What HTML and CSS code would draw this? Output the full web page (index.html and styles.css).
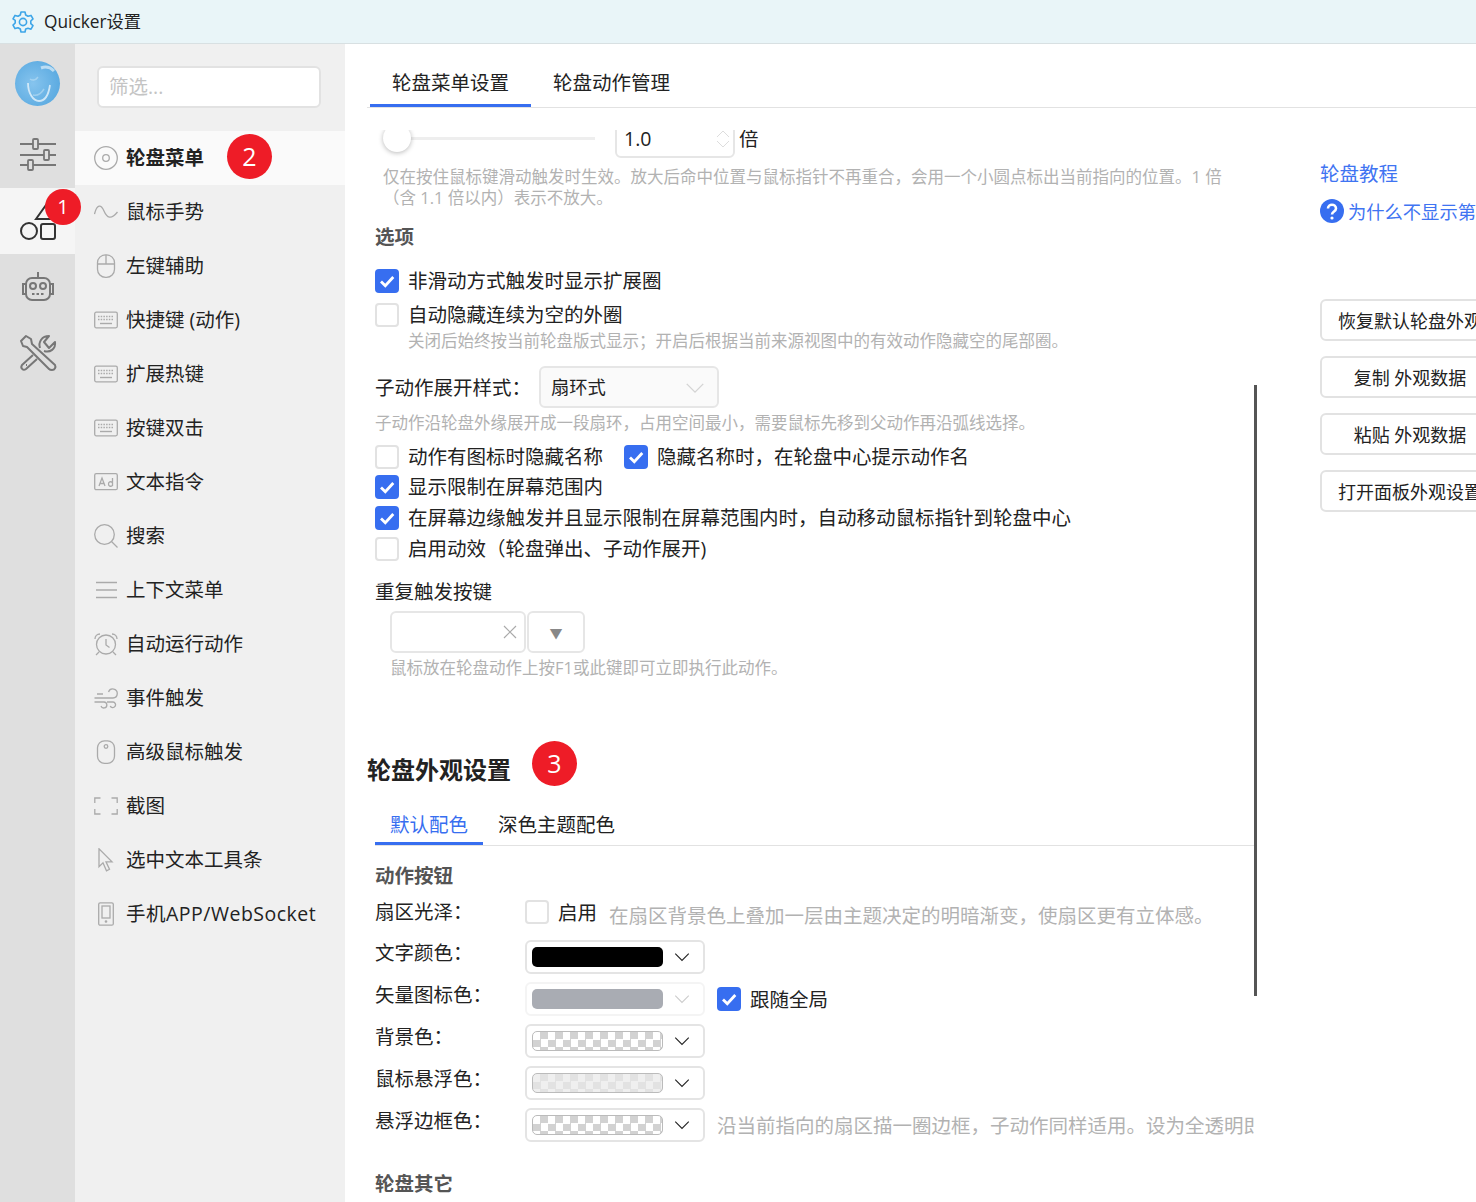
FILE: index.html
```html
<!DOCTYPE html>
<html lang="zh-CN">
<head>
    <meta charset="UTF-8">
    <title>Quicker设置</title>
    <link rel="stylesheet" href="styles.css">
</head>
<body>

<svg class="defs" width="0" height="0">
    <symbol id="i-keyboard" viewBox="0 0 24 24">
        <rect x="0.7" y="4.200" width="22.6" height="15.600" rx="1.5" fill="none" stroke="currentColor" stroke-width="1.3"/>
        <path d="M4 8.500h16M4 11.500h16" stroke="currentColor" stroke-width="1.4" stroke-dasharray="1.5 1.2" fill="none"/>
        <path d="M6 15.500h12" stroke="currentColor" stroke-width="1.4" fill="none"/>
    </symbol>
    <symbol id="i-check" viewBox="0 0 24 24">
        <path d="M6 12.5l4.3 4.3L18.3 8" fill="none" stroke="#fff" stroke-width="2.8"/>
    </symbol>
    <symbol id="i-chevron" viewBox="0 0 16 16">
        <path d="M2 5l6 6 6-6" fill="none" stroke="currentColor" stroke-width="1"/>
    </symbol>
</svg>

<!-- Title bar -->
<header class="titlebar">
    <svg class="title-icon" width="24" height="24" viewBox="0 0 24 24" fill="none" stroke="#3da5e8" stroke-width="1.6" stroke-linejoin="round">
        <path d="M10 2h4l.7 3 2.3 1.3 3-.9 2 3.5-2.2 2.1v2.6l2.2 2.1-2 3.5-3-.9L14.700 19l-.7 3h-4l-.7-3L7 17.700l-3 .9-2-3.500L4.200 13v-2.600L2 8.900l2-3.500 3 .9L9.300 5z"/>
        <circle cx="12" cy="12" r="3.600"/>
    </svg>
    <span class="title-text">Quicker设置</span>
</header>

<div class="app">

    <!-- Icon rail -->
    <nav class="rail">
        <div class="avatar">
            <svg width="45" height="45" viewBox="0 0 45 45" fill="none" stroke="#dff0fa" stroke-width="1.800">
                <path d="M13 22c0 10 5 18 11 18 7 0 10-9 11-16" opacity=".85"/>
                <path d="M26 7c5-2 10 0 13 3" stroke-width="3" opacity=".7"/>
                <path d="M15 18c3 2 6 1 8-2M18 34c4 1 8-1 11-6" stroke-width="1.500" opacity=".4"/>
            </svg>
        </div>
        <div class="rail-item">
            <svg width="36" height="36" viewBox="0 0 36 36" fill="none" stroke="#777" stroke-width="1.800">
                <path d="M0 7h13M18 7h18M0 18h24M29 18h7M0 28h8M13 28h23"/>
                <rect x="13" y="2" width="5" height="10" rx="1"/>
                <rect x="24" y="13" width="5" height="10" rx="1"/>
                <rect x="8" y="23" width="5" height="10" rx="1"/>
            </svg>
        </div>
        <div class="rail-item active">
            <svg width="38" height="38" viewBox="0 0 38 38" fill="none" stroke="#333" stroke-width="2">
                <circle cx="10" cy="29" r="8"/>
                <rect x="22" y="22" width="14" height="15" rx="2"/>
                <path d="M17 17L27 3l9 14z"/>
            </svg>
            <span class="badge badge-one">1</span>
        </div>
        <div class="rail-item">
            <svg width="34" height="34" viewBox="0 -1 34 34" fill="none" stroke="#777" stroke-width="2">
                <path d="M17 1v6"/>
                <rect x="5" y="7" width="24" height="22" rx="6"/>
                <path d="M5 13H2v10h3M29 13h3v10h-3"/>
                <circle cx="12" cy="15" r="3"/>
                <circle cx="22" cy="15" r="3"/>
                <path d="M11 23h12" stroke-dasharray="2.500 2"/>
            </svg>
        </div>
        <div class="rail-item">
            <svg width="38" height="38" viewBox="0 0 38 38" fill="none" stroke="#777" stroke-width="2" stroke-linejoin="round">
                <path d="M2 7l5-5 5 3 1 5 23 21c1 2 0 5-3 5-1 0-2 0-3-1L8 13l-4-1z"/>
                <path d="M21 14c-2-6 2-12 9-12l-5 6 5 6 6-6c1 7-5 11-11 9"/>
                <path d="M14 21L3 31c-2 3 1 6 4 4l11-10"/>
                <path d="M7 31l1 0"/>
            </svg>
        </div>
    </nav>

    <!-- Sidebar -->
    <aside class="sidebar">
        <div class="filter">筛选...</div>
        <ul class="menu">
            <li class="menu-item selected">
                <svg class="menu-icon" viewBox="0 0 24 24"><circle cx="12" cy="12" r="11.300"/><circle cx="12" cy="12" r="3.300"/></svg>
                <b>轮盘菜单</b>
                <span class="badge badge-two">2</span>
            </li>
            <li class="menu-item">
                <svg class="menu-icon" viewBox="0 0 24 24"><path d="M0.500 14C3 4 7 4 10 11s7 9 13.500 1"/></svg>
                鼠标手势
            </li>
            <li class="menu-item">
                <svg class="menu-icon" viewBox="0 0 24 24"><rect x="3.500" y="0.800" width="17" height="22.500" rx="8"/><path d="M3.500 10h17M12 1v9"/></svg>
                左键辅助
            </li>
            <li class="menu-item">
                <svg class="menu-icon"><use href="#i-keyboard"/></svg>
                快捷键 (动作)
            </li>
            <li class="menu-item">
                <svg class="menu-icon"><use href="#i-keyboard"/></svg>
                扩展热键
            </li>
            <li class="menu-item">
                <svg class="menu-icon"><use href="#i-keyboard"/></svg>
                按键双击
            </li>
            <li class="menu-item">
                <svg class="menu-icon" viewBox="0 0 24 24"><rect x="0.700" y="3.700" width="22.600" height="16" rx="1.500"/><path d="M5 16l3-8 3 8M6 13.500h4M18.500 8v8M18.500 12.500c-2-1.500-4-.5-4 1.500s2 3 4 1.500"/></svg>
                文本指令
            </li>
            <li class="menu-item">
                <svg class="menu-icon" viewBox="0 0 24 24"><circle cx="10.500" cy="10.500" r="9.800"/><path d="M17.500 17.500l6 6"/></svg>
                搜索
            </li>
            <li class="menu-item">
                <svg class="menu-icon" viewBox="0 0 24 24"><path d="M2 4.500h21M2 12h21M2 19.500h21"/></svg>
                上下文菜单
            </li>
            <li class="menu-item">
                <svg class="menu-icon" viewBox="0 0 24 24"><circle cx="12" cy="12.500" r="9.500"/><path d="M12 7v6l3.500 2.500M1 7c0-3 2-5 5-5M23 7c0-3-2-5-5-5M5 20l-3 3M19 20l3 3"/></svg>
                自动运行动作
            </li>
            <li class="menu-item">
                <svg class="menu-icon" viewBox="0 0 24 24"><path d="M0.500 12H19a4.500 4.500 0 1 0-4.500-6M3 8h6M13 16h6a2.800 2.800 0 1 1-2.800 4M0.500 16h9.500a3 3 0 1 1-3 4"/></svg>
                事件触发
            </li>
            <li class="menu-item">
                <svg class="menu-icon" viewBox="0 0 24 24"><rect x="3.500" y="0.800" width="17" height="22.500" rx="7"/><circle cx="12" cy="6.500" r="1.800"/></svg>
                高级鼠标触发
            </li>
            <li class="menu-item">
                <svg class="menu-icon" viewBox="0 0 24 24"><path d="M6.500 4H0.800v5M17.500 4h5.700v5M6.500 20H0.800v-5M17.500 20h5.700v-5"/></svg>
                截图
            </li>
            <li class="menu-item">
                <svg class="menu-icon" viewBox="0 0 24 24"><path d="M5 0.800v18l4-4 3.500 8 3-1.500-3.500-7.500h6z"/></svg>
                选中文本工具条
            </li>
            <li class="menu-item wide-latin">
                <svg class="menu-icon" viewBox="0 0 24 24"><rect x="4.700" y="0.800" width="14.600" height="22.400" rx="1.500"/><rect x="8" y="4" width="8" height="12"/><circle cx="12" cy="19.500" r="0.700"/></svg>
                手机APP/WebSocket
            </li>
        </ul>
    </aside>

    <!-- Main panel -->
    <main class="main">
        <div class="tabs">
            <div class="tab current">轮盘菜单设置</div>
            <div class="tab">轮盘动作管理</div>
        </div>

        <div class="panel">
            <section class="scroll">
                <div class="slider-row">
                    <div class="slider"><span class="thumb"></span></div>
                    <div class="num-input">
                        <span class="tight">1.0</span>
                        <svg class="spin" width="18" height="24" viewBox="0 0 18 24" fill="none" stroke="#ddd"><path d="M3 10l6-6 6 6M3 14l6 6 6-6"/></svg>
                    </div>
                    <span class="tight">倍</span>
                </div>
                <p class="hint hint-wide">仅在按住鼠标键滑动触发时生效。放大后命中位置与鼠标指针不再重合，会用一个小圆点标出当前指向的位置。1 倍<br>（含 1.1 倍以内）表示不放大。</p>

                <h4 class="group-title">选项</h4>
                <div class="check-row first"><span class="cb on"><svg><use href="#i-check"/></svg></span>非滑动方式触发时显示扩展圈</div>
                <div class="check-row second"><span class="cb"></span>自动隐藏连续为空的外圈</div>
                <p class="hint hint-check">关闭后始终按当前轮盘版式显示；开启后根据当前来源视图中的有效动作隐藏空的尾部圈。</p>

                <div class="select-row">
                    <label class="select-label">子动作展开样式：</label>
                    <div class="select">扇环式<svg class="chev" width="22" height="22"><use href="#i-chevron"/></svg></div>
                </div>
                <p class="hint hint-select">子动作沿轮盘外缘展开成一段扇环，占用空间最小，需要鼠标先移到父动作再沿弧线选择。</p>

                <div class="check-row r-hide">
                    <span class="cb"></span>动作有图标时隐藏名称
                    <span class="cb on next"><svg><use href="#i-check"/></svg></span>隐藏名称时，在轮盘中心提示动作名
                </div>
                <div class="check-row r-limit"><span class="cb on"><svg><use href="#i-check"/></svg></span>显示限制在屏幕范围内</div>
                <div class="check-row r-move"><span class="cb on"><svg><use href="#i-check"/></svg></span>在屏幕边缘触发并且显示限制在屏幕范围内时，自动移动鼠标指针到轮盘中心</div>
                <div class="check-row r-move"><span class="cb"></span>启用动效（轮盘弹出、子动作展开)</div>

                <div class="plain-label">重复触发按键</div>
                <div class="key-row">
                    <div class="key-input">
                        <svg width="14" height="14" viewBox="0 0 14 14" stroke="#aaa" stroke-width="1.200"><path d="M1 1l12 12M13 1L1 13"/></svg>
                    </div>
                    <div class="key-drop">▼</div>
                </div>
                <p class="hint hint-key">鼠标放在轮盘动作上按F1或此键即可立即执行此动作。</p>

                <h2 class="section-title">轮盘外观设置<span class="badge badge-three">3</span></h2>

                <div class="subtabs">
                    <div class="subtab current">默认配色</div>
                    <div class="subtab">深色主题配色</div>
                </div>

                <h4 class="group-title action-title">动作按钮</h4>
                <div class="color-row gloss">
                    <span class="color-label">扇区光泽：</span>
                    <span class="cb"></span><span class="gloss-on">启用</span>
                    <span class="hint gloss-hint">在扇区背景色上叠加一层由主题决定的明暗渐变，使扇区更有立体感。</span>
                </div>
                <div class="color-row">
                    <span class="color-label">文字颜色：</span>
                    <div class="color-select"><span class="swatch black"></span><svg class="chev-sm"><use href="#i-chevron"/></svg></div>
                </div>
                <div class="color-row">
                    <span class="color-label">矢量图标色：</span>
                    <div class="color-select off"><span class="swatch grey"></span><svg class="chev-sm"><use href="#i-chevron"/></svg></div>
                    <span class="cb on follow"><svg><use href="#i-check"/></svg></span><span class="gloss-on">跟随全局</span>
                </div>
                <div class="color-row">
                    <span class="color-label">背景色：</span>
                    <div class="color-select"><span class="swatch checker"></span><svg class="chev-sm"><use href="#i-chevron"/></svg></div>
                </div>
                <div class="color-row">
                    <span class="color-label">鼠标悬浮色：</span>
                    <div class="color-select"><span class="swatch checker faint"></span><svg class="chev-sm"><use href="#i-chevron"/></svg></div>
                </div>
                <div class="color-row">
                    <span class="color-label">悬浮边框色：</span>
                    <div class="color-select"><span class="swatch checker"></span><svg class="chev-sm"><use href="#i-chevron"/></svg></div>
                    <span class="hint border-hint">沿当前指向的扇区描一圈边框，子动作同样适用。设为全透明即可关闭此效果。</span>
                </div>

                <h4 class="group-title other-title">轮盘其它</h4>
            </section>

            <span class="scrollbar"></span>

            <section class="side-col">
                <a class="link tutorial">轮盘教程</a>
                <a class="link why">
                    <svg width="24" height="24" viewBox="0 0 24 24"><circle cx="12" cy="12" r="12" fill="#376ef0"/><path d="M8 9.500c0-5 8-5 8 0 0 3-4 3-4 6" fill="none" stroke="#fff" stroke-width="2.600"/><circle cx="12" cy="19" r="1.600" fill="#fff"/></svg>
                    为什么不显示第三圈
                </a>
                <div class="side-buttons">
                    <button class="side-btn">恢复默认轮盘外观</button>
                    <button class="side-btn">复制 外观数据</button>
                    <button class="side-btn">粘贴 外观数据</button>
                    <button class="side-btn">打开面板外观设置</button>
                </div>
            </section>
        </div>
    </main>
</div>

</body>
</html>
```

FILE: styles.css
```css
* {
    margin: 0;
    padding: 0;
    box-sizing: border-box;
}

html, body {
    height: 1202px;
    overflow: hidden;
}

body {
    font-family: "Open Sans", "Noto Sans CJK SC", sans-serif;
    font-size: 19.5px;
    color: #222;
    background: #fff;
}

.defs {
    position: absolute;
}

/* Title bar */
.titlebar {
    height: 44px;
    display: flex;
    align-items: center;
    padding-left: 11px;
    background: #e9f5f8;
    border-bottom: 1px solid #d8e0e2;
    font-size: 17.3px;
}

.title-icon {
    margin-right: 9px;
}

.title-text {
    padding-bottom: 3px;
}

.app {
    display: flex;
    height: 1158px;
}

/* Icon rail */
.rail {
    width: 75px;
    flex: none;
    background: #dfdfdf;
    padding-top: 17px;
}

.avatar {
    width: 45px;
    height: 45px;
    margin: 0 0 16px 15px;
    border-radius: 50%;
    overflow: hidden;
    background: radial-gradient(circle at 40% 50%, #86c4ee, #4fa3dd);
}

.avatar svg {
    display: block;
}

.rail-item {
    height: 66px;
    display: flex;
    align-items: center;
    justify-content: center;
    position: relative;
}

.rail-item.active {
    background: #f5f5f5;
}

.badge {
    position: absolute;
    display: flex;
    align-items: center;
    justify-content: center;
    border-radius: 50%;
    background: #ee1c27;
    color: #fff;
    font-weight: 400;
    padding-bottom: 2px;
}

.badge-one {
    width: 36px;
    height: 36px;
    left: 45px;
    top: 1px;
    font-size: 20px;
}

.badge-two,
.badge-three {
    width: 45px;
    height: 45px;
    font-size: 25px;
}

.badge-two {
    left: 152px;
    top: 3px;
}

.badge-three {
    left: 165px;
    top: -13px;
}

/* Sidebar */
.sidebar {
    width: 270px;
    flex: none;
    background: #f0f0f0;
    padding-top: 22px;
}

.filter {
    width: 224px;
    height: 42px;
    margin-left: 22px;
    padding-left: 10px;
    line-height: 38px;
    background: #fff;
    border: 2px solid #e2e2e2;
    border-radius: 6px;
    color: #c4c4c4;
}

.menu {
    list-style: none;
    margin-top: 23px;
}

.menu-item {
    height: 54px;
    display: flex;
    align-items: center;
    padding-left: 19px;
    padding-bottom: 3px;
    position: relative;
}

.menu-item.selected {
    background: #fafafa;
}

.menu-item.wide-latin {
    letter-spacing: 0.5px;
}

.menu-item b {
    font-weight: 700;
}

.menu-icon {
    width: 24px;
    height: 24px;
    margin-right: 8px;
    fill: none;
    stroke: #aaa;
    stroke-width: 1.3;
    color: #aaa;
    flex: none;
    position: relative;
    top: 1.5px;
}

/* Main panel */
.main {
    flex: 1;
    min-width: 0;
    overflow: hidden;
    background: #fff;
}

.tabs {
    height: 64px;
    display: flex;
    margin-left: 22px;
    padding-left: 3px;
    border-bottom: 1px solid #e2e2e2;
    align-items: flex-end;
}

.tab {
    height: 47px;
    padding: 0 22px;
    line-height: 46px;
    border-bottom: 3px solid transparent;
}

.tab.current {
    border-bottom-color: #376ef0;
}

.panel {
    display: flex;
    height: 1094px;
    position: relative;
}

.scroll {
    flex: none;
    width: 909px;
    height: 1072px;
    margin-top: 22px;
    padding-left: 30px;
    overflow: hidden;
}

.scrollbar {
    position: absolute;
    left: 909px;
    top: 277px;
    width: 3px;
    height: 611px;
    background: #555;
}

.slider-row {
    height: 40px;
    margin: -12px 0 0 8px;
    display: flex;
    align-items: center;
}

.tight {
    line-height: 14px;
    position: relative;
    top: 1px;
}

.slider {
    width: 212px;
    height: 3px;
    background: #eee;
    position: relative;
    margin-right: 20px;
}

.thumb {
    position: absolute;
    left: 0;
    top: -13px;
    width: 28px;
    height: 28px;
    border-radius: 50%;
    background: #fff;
    box-shadow: 0 1px 5px rgba(0, 0, 0, 0.28);
}

.num-input {
    width: 120px;
    height: 40px;
    margin-right: 4px;
    padding-left: 7px;
    display: flex;
    align-items: center;
    border: 2px solid #e6e6e6;
    border-radius: 6px;
    position: relative;
}

.spin {
    position: absolute;
    right: 1px;
    top: 7px;
}

.hint {
    color: #b2b2b2;
    font-size: 16.5px;
    line-height: 21px;
}

.hint-wide {
    margin: 8px 0 0 8px;
}

.group-title {
    height: 24px;
    line-height: 25px;
    margin-top: 16px;
    font-weight: 700;
    font-size: 19.5px;
    color: #555;
}

.check-row {
    height: 24px;
    line-height: 24px;
    display: flex;
    align-items: center;
    white-space: nowrap;
}

.check-row.first {
    margin-top: 21px;
}

.check-row.second {
    margin-top: 10px;
}

.check-row.r-hide {
    margin-top: 12px;
}

.check-row.r-limit {
    margin-top: 6px;
}

.check-row.r-move {
    margin-top: 7px;
}

.cb {
    width: 24px;
    height: 24px;
    flex: none;
    margin-right: 9px;
    border: 2px solid #e2e2e2;
    border-radius: 4px;
    background: #fff;
}

.cb.on {
    background: #376ef0;
    border: none;
}

.cb svg {
    display: block;
    width: 24px;
    height: 24px;
}

.cb.next {
    margin-left: 21px;
}

.hint-check {
    margin: 4px 0 0 33px;
    height: 20px;
    line-height: 20px;
}

.select-row {
    height: 42px;
    margin-top: 15px;
    display: flex;
    align-items: center;
}

.select-label {
    width: 164px;
    padding-bottom: 2px;
}

.select {
    width: 180px;
    height: 42px;
    padding-left: 10px;
    font-size: 18.3px;
    line-height: 38px;
    border: 2px solid #e6e6e6;
    border-radius: 6px;
    background: #fafafa;
    position: relative;
}

.chev {
    position: absolute;
    right: 11px;
    top: 9px;
    color: #d4d4d4;
}

.hint-select {
    margin-top: 5px;
    height: 20px;
    line-height: 20px;
}

.plain-label {
    height: 24px;
    line-height: 24px;
    margin-top: 19px;
}

.key-row {
    display: flex;
    height: 42px;
    margin: 7px 0 0 15px;
}

.key-input {
    width: 136px;
    border: 2px solid #e6e6e6;
    border-radius: 6px;
    display: flex;
    align-items: center;
    justify-content: flex-end;
    padding-right: 7px;
}

.key-drop {
    width: 58px;
    margin-left: 1px;
    border: 2px solid #e6e6e6;
    border-radius: 6px;
    display: flex;
    align-items: center;
    justify-content: center;
    color: #888;
    font-size: 13px;
}

.hint-key {
    margin: 5px 0 0 15px;
    height: 20px;
    line-height: 20px;
}

.section-title {
    height: 32px;
    line-height: 32px;
    margin: 76px 0 0 -8px;
    font-size: 24px;
    font-weight: 700;
    color: #222;
    position: relative;
}

/* Sub tabs */
.subtabs {
    display: flex;
    height: 42px;
    margin-top: 18px;
    border-bottom: 1px solid #e2e2e2;
    align-items: flex-end;
}

.subtab {
    height: 41px;
    padding: 0 15px;
    line-height: 42px;
    border-bottom: 3px solid transparent;
}

.subtab.current {
    color: #376ef0;
    border-bottom-color: #376ef0;
}

.action-title {
    margin-top: 17px;
}

/* Colour rows */
.color-row {
    height: 34px;
    margin-top: 8px;
    display: flex;
    align-items: center;
    white-space: nowrap;
}

.color-row.gloss {
    height: 24px;
    margin: 13px 0 16px;
}

.color-label {
    width: 150px;
    flex: none;
    position: relative;
    top: -6px;
}

.gloss .color-label {
    top: -2px;
}

.gloss-on {
    position: relative;
    top: -1px;
}

.hint.gloss-hint {
    margin-left: 12px;
    position: relative;
    top: 3px;
    font-size: 19.5px;
}

.color-select {
    width: 180px;
    height: 34px;
    flex: none;
    padding: 0 12px 0 5px;
    display: flex;
    align-items: center;
    justify-content: space-between;
    border: 2px solid #e4e4e4;
    border-radius: 6px;
}

.color-select.off {
    border-color: #f4f4f4;
    color: #ccc;
}

.swatch {
    width: 131px;
    height: 20px;
    border-radius: 5px;
}

.swatch.black {
    background: #000;
}

.swatch.grey {
    background: #a9acb3;
}

.swatch.checker {
    border: 1px solid #bbb;
    background: conic-gradient(#d2d2d2 25%, #fff 0 50%, #d2d2d2 0 75%, #fff 0) 0 0 / 15px 15px;
}

.swatch.checker.faint {
    background: conic-gradient(#e2e2e2 25%, #efefef 0 50%, #e2e2e2 0 75%, #efefef 0) 0 0 / 15px 15px;
}

.chev-sm {
    width: 18px;
    height: 18px;
    color: #222;
}

.off .chev-sm {
    color: #ccc;
}

.cb.follow {
    margin-left: 12px;
}

.hint.border-hint {
    margin-left: 12px;
    font-size: 19.5px;
}

.other-title {
    margin-top: 29px;
}

/* Right column */
.side-col {
    flex: none;
    width: 200px;
    margin-left: 66px;
    white-space: nowrap;
}

.link {
    color: #3f74f2;
    display: flex;
    align-items: center;
}

.tutorial {
    margin-top: 51px;
    height: 26px;
}

.why {
    margin-top: 13px;
    height: 26px;
    font-size: 18.3px;
}

.why svg {
    margin-right: 4px;
    flex: none;
}

.side-buttons {
    margin-top: 75px;
    display: flex;
    flex-direction: column;
    gap: 15px;
}

.side-btn {
    width: 180px;
    height: 42px;
    font: inherit;
    font-size: 18px;
    color: #222;
    background: #fff;
    border: 2px solid #e2e2e2;
    border-radius: 6px;
    white-space: nowrap;
}
```
